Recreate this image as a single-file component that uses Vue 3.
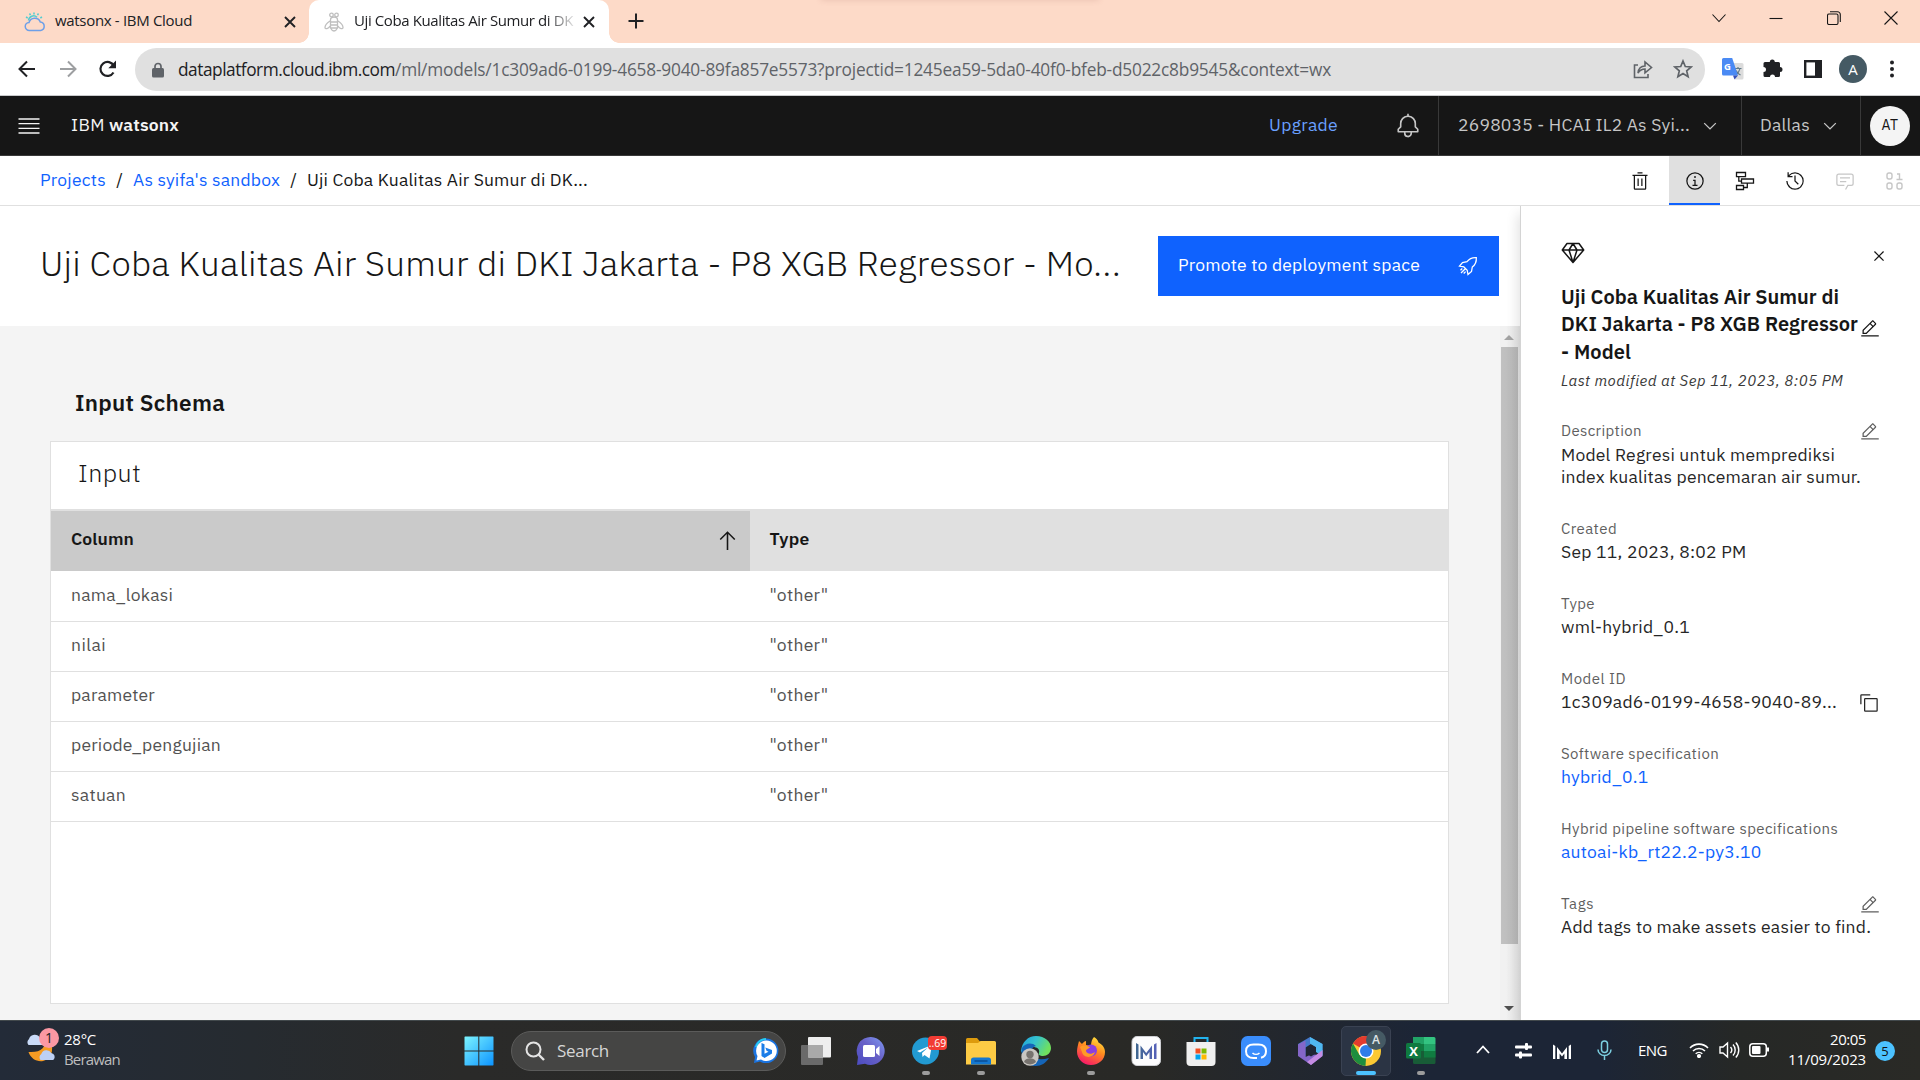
<script setup>
import { h } from 'vue'

/* Spreads the letters of a label so that it fills the given width in pixels. */
const vFit = {
  mounted(el, binding) {
    const natural = el.getBoundingClientRect().width
    const spacing = (binding.value - natural) / el.textContent.length
    el.style.letterSpacing = spacing.toFixed(3) + 'px'
  },
}

const paths = {
  trash: 'M12 12H14V24H12zM18 12H20V24H18zM4 6V8H6V28a2 2 0 002 2H24a2 2 0 002-2V8h2V6zM8 28V8H24V28zM12 2H20V4H12z',
  info: 'M17 22V14H13V16H15V22H12V24H20V22zM16 8a1.5 1.5 0 101.5 1.5A1.5 1.5 0 0016 8zM16 30A14 14 0 1130 16 14 14 0 0116 30zM16 4A12 12 0 1028 16 12 12 0 0016 4z',
  edit: 'M2 26H30V28H2zM25.4 9c.8-.8.8-2 0-2.8l-3.6-3.6c-.8-.8-2-.8-2.8 0l-15 15V24h6.4L25.4 9zM20.4 4L24 7.6l-3 3L17.4 7 20.4 4zM6 22v-3.6l10-10 3.6 3.6-10 10H6z',
  copy: 'M28 10V28H10V10H28m0-2H10a2 2 0 00-2 2V28a2 2 0 002 2H28a2 2 0 002-2V10a2 2 0 00-2-2zM4 18H2V4A2 2 0 014 2H18V4H4z',
  bell: 'M28.707 19.293L26 16.586V13a10.014 10.014 0 00-9-9.95V1H15V3.05A10.014 10.014 0 006 13v3.586L3.293 19.293A1 1 0 003 20v3a1 1 0 001 1h7v.777a5.152 5.152 0 004.5 5.199A5.006 5.006 0 0021 25V24h7a1 1 0 001-1V20A1 1 0 0028.707 19.293zM19 25a3 3 0 01-6 0V24h6zm8-3H5V20.414L7.707 17.707A1 1 0 008 17V13a8 8 0 0116 0v4a1 1 0 00.293.707L27 20.414z',
  chevron: 'M16 22L6 12 7.4 10.6 16 19.2 24.6 10.6 26 12z',
  history: 'M20.59 22L15 16.41V7h2v8.58l5 5.01zM16 2A13.94 13.94 0 006 6.23V2H4v8h8V8H7.08A12 12 0 114 16H2A14 14 0 1016 2z',
  arrowUp: 'M16 4L6 14 7.41 15.41 15 7.83V28h2V7.83l7.59 7.58L26 14z',
  close: 'M24 9.4L22.6 8 16 14.6 9.4 8 8 9.4 14.6 16 8 22.6 9.4 24 16 17.4 22.6 24 24 22.6 17.4 16z',
  chat: 'M17.740 30L16 29l4-7h6a2 2 0 002-2V8a2 2 0 00-2-2H6A2 2 0 004 8V20a2 2 0 002 2h9v2H6a4 4 0 01-4-4V8A4 4 0 016 4H26a4 4 0 014 4V20a4 4 0 01-4 4H21.160zM8 10H24V12H8zM8 16H18V18H8z',
}

const Icon = (props) =>
  h('svg', { viewBox: '0 0 32 32', width: props.size, height: props.size, fill: 'currentColor' }, [
    h('path', { d: paths[props.name] }),
  ])
Icon.props = ['name', 'size']

const rows = [
  { name: 'nama_lokasi', w: 102 },
  { name: 'nilai', w: 35 },
  { name: 'parameter', w: 84 },
  { name: 'periode_pengujian', w: 150 },
  { name: 'satuan', w: 55 },
]

const details = [
  { label: 'Description', lw: 81, lines: [['Model Regresi untuk memprediksi', 274], ['index kualitas pencemaran air sumur.', 300]], icon: 'edit' },
  { label: 'Created', lw: 56, lines: [['Sep 11, 2023, 8:02 PM', 185.5]] },
  { label: 'Type', lw: 34, lines: [['wml-hybrid_0.1', 129]] },
  { label: 'Model ID', lw: 65, lines: [['1c309ad6-0199-4658-9040-89...', 276]], icon: 'copy' },
  { label: 'Software specification', lw: 158, lines: [['hybrid_0.1', 87.5]], link: true },
  { label: 'Hybrid pipeline software specifications', lw: 277, lines: [['autoai-kb_rt22.2-py3.10', 200.5]], link: true },
  { label: 'Tags', lw: 33, lines: [['Add tags to make assets easier to find.', 310]], icon: 'edit' },
]
</script>

<template>
  <div class="screen">
    <div class="tabs">
      <div class="tab first">
        <svg class="favicon" width="22" height="20" viewBox="0 0 22 20" fill="none" stroke-width="1.500">
          <g stroke="#52cdd0">
            <path d="M4.500 8.500a5 5 0 0 1 8.500-3.200M10 .5v2M5.500 1.500l1 1.700M2 5l1.700 1M14.500 1.500l-1 1.700M18 5l-1.700 1" />
          </g>
          <path d="M5.500 18.500a4 4 0 0 1-.5-8 6 6 0 0 1 11.300-.5 4.300 4.300 0 0 1 .4 8.500z" stroke="#6d9fe8" />
        </svg>
        <span v-fit="137" class="tab-text">watsonx - IBM Cloud</span>
        <svg class="tab-x" width="12" height="12" viewBox="0 0 12 12"><path d="M1 1l10 10M11 1L1 11" stroke="#202124" stroke-width="1.900" /></svg>
      </div>
      <div class="tab active">
        <svg class="bee" width="20" height="20" viewBox="0 0 20 20" fill="none" stroke="#bfbfbf" stroke-width="1.300">
          <circle cx="7.500" cy="3" r="1.800" /><circle cx="12.500" cy="3" r="1.800" />
          <path d="M6.500 8a3.500 3 0 0 1 7 0v8c-1 2-2 3-3.500 3s-2.500-1-3.500-3zM6.500 10h7M6.500 13h7M7 16h6M6 9c-3 2-5 4-5 6.500 0 2 3.500 1.500 5-1.500M14 9c3 2 5 4 5 6.500 0 2-3.500 1.500-5-1.500" />
        </svg>
        <span class="fade"><span v-fit="219" class="tab-text">Uji Coba Kualitas Air Sumur di DK</span></span>
        <svg class="tab-x" width="12" height="12" viewBox="0 0 12 12"><path d="M1 1l10 10M11 1L1 11" stroke="#202124" stroke-width="1.900" /></svg>
      </div>
      <svg class="plus" width="16" height="16" viewBox="0 0 16 16"><path d="M8 .5v15M.5 8h15" stroke="#202124" stroke-width="2" /></svg>
      <div class="notch"></div>
      <div class="win">
        <svg width="14" height="14" viewBox="0 0 14 14"><path d="M.5 3.500l6.500 7 6.500-7" /></svg>
        <svg width="14" height="14" viewBox="0 0 14 14"><path d="M.5 7.500h13" /></svg>
        <svg width="14" height="14" viewBox="0 0 14 14"><rect x=".5" y="3" width="10.500" height="10.500" rx="1.500" /><path d="M3 .8h7.500a2.800 2.800 0 0 1 2.800 2.800v7.400" /></svg>
        <svg width="14" height="14" viewBox="0 0 14 14"><path d="M.5.5l13 13M13.500.5l-13 13" /></svg>
      </div>
    </div>

    <div class="toolbar">
      <svg class="nav-back" width="18" height="18" viewBox="0 0 18 18"><path d="M17 9H2.500M9 1.500L1.500 9 9 16.500" fill="none" stroke="#202124" stroke-width="2" /></svg>
      <svg class="nav-next" width="18" height="18" viewBox="0 0 18 18"><path d="M1 9h14.500M9 1.500L16.500 9 9 16.500" fill="none" stroke="#9d9fa1" stroke-width="2" /></svg>
      <svg class="nav-reload" width="20" height="18" viewBox="0 0 20 18"><path d="M15.500 12.500a7 7 0 1 1 .3-6.500" fill="none" stroke="#202124" stroke-width="2.200" /><path d="M18 .5v7.700h-7.700z" fill="#202124" /></svg>
      <div class="address">
        <svg class="lock" width="12" height="16" viewBox="0 0 12 16"><rect x="0" y="6" width="12" height="9.500" rx="1.500" fill="#5f6368" /><path d="M3 7V4.500a3 3 0 0 1 6 0V7" fill="none" stroke="#5f6368" stroke-width="1.700" /></svg>
        <span v-fit="217" class="url host">dataplatform.cloud.ibm.com</span>
        <span v-fit="936" class="url rest">/ml/models/1c309ad6-0199-4658-9040-89fa857e5573?projectid=1245ea59-5da0-40f0-bfeb-d5022c8b9545&amp;context=wx</span>
        <svg class="share" width="20" height="20" viewBox="0 0 20 20" fill="none" stroke="#5f6368" stroke-width="1.600"><path d="M5 6H1.500v12.500H15V15M5 14c.5-4.500 3-7 7-7V3l6.500 5.500-6.500 5.300V10c-3 0-5 1-7 4z" /></svg>
        <svg class="star" width="20" height="20" viewBox="0 0 20 20" fill="none" stroke="#5f6368" stroke-width="1.700"><path d="M10 2l2.300 5.500 5.900.5-4.500 3.900 1.400 5.800L10 14.600l-5.100 3.100 1.400-5.800L1.800 8l5.900-.5z" /></svg>
      </div>
      <svg class="translate" width="22" height="22" viewBox="0 0 22 22">
        <path d="M9 5h11a1.500 1.500 0 0 1 1.500 1.500V20a1.500 1.500 0 0 1-1.500 1.500h-7z" fill="#dcdcdc" />
        <path d="M12.500 10.500h7M16 9v1.500M18 10.500c-.5 2.500-2 4.500-4 6M14 12.500c1 2 2.500 3.500 4.500 4.500" stroke="#607988" stroke-width="1.200" fill="none" />
        <path d="M1.500 0h8.700l5.800 17.500H1.500A1.500 1.500 0 0 1 0 16V1.500A1.500 1.500 0 0 1 1.500 0z" fill="#4a8af4" />
        <path d="M11 17.500h5L12.500 21.500z" fill="#3551b8" />
        <text x="2" y="11.500" font-size="9.500" font-weight="700" fill="#fff" font-family="Open Sans, sans-serif">G</text>
      </svg>
      <svg class="puzzle" width="20" height="20" viewBox="0 0 20 20"><path d="M2 5h4.800a2.500 2.500 0 1 1 5 0H15.500a1.500 1.500 0 0 1 1.500 1.500V10a2.500 2.500 0 1 1 0 5v3.500A1.500 1.500 0 0 1 15.500 20H12a2.500 2.500 0 0 0-5 0H2a1.500 1.500 0 0 1-1.500-1.500V15a2.500 2.500 0 0 0 0-5V6.500A1.500 1.500 0 0 1 2 5z" fill="#202124" /></svg>
      <svg class="side" width="18" height="18" viewBox="0 0 18 18"><rect x="1.200" y="1.200" width="15.600" height="15.600" fill="#fff" stroke="#202124" stroke-width="2.400" /><rect x="11" y="1" width="6" height="16" fill="#202124" /></svg>
      <div class="avatar">A</div>
      <svg class="kebab" width="4" height="18" viewBox="0 0 4 18" fill="#202124"><circle cx="2" cy="2.500" r="2" /><circle cx="2" cy="9" r="2" /><circle cx="2" cy="15.500" r="2" /></svg>
    </div>

    <header class="header">
      <svg class="burger" width="22" height="16" viewBox="0 0 22 16" stroke="#f4f4f4" stroke-width="1.300"><path d="M.5 1h21M.5 5.700h21M.5 10.300h21M.5 15h21" /></svg>
      <span class="brand"><span v-fit="34" class="ib">IBM</span><b v-fit="70" class="ib">watsonx</b></span>
      <span v-fit="69" class="upgrade">Upgrade</span>
      <Icon name="bell" size="26" class="bell" />
      <div class="account"><span v-fit="232" class="ib">2698035 - HCAI IL2 As Syi...</span><Icon name="chevron" size="20" class="chev" /></div>
      <div class="region"><span v-fit="50" class="ib">Dallas</span><Icon name="chevron" size="20" class="chev" /></div>
      <div class="user"><div class="user-circle"><span v-fit="17">AT</span></div></div>
    </header>

    <nav class="crumbs">
      <a v-fit="66">Projects</a><i>/</i>
      <a v-fit="147">As syifa's sandbox</a><i>/</i>
      <span v-fit="281" class="here">Uji Coba Kualitas Air Sumur di DK...</span>
      <div class="actions">
        <div class="act"><Icon name="trash" size="20" /></div>
        <div class="act on"><Icon name="info" size="20" /></div>
        <div class="act">
          <svg width="20" height="20" viewBox="0 0 20 20" fill="none" stroke="#161616" stroke-width="1.300"><path d="M1.500 1.500h9v4.200h-9zM6.500 8h12v4.200h-12zM1.500 14.500h7v4h-7zM3.800 5.700v4.400h2.700M12.300 12.200v4.300H8.500" /></svg>
        </div>
        <div class="act"><Icon name="history" size="20" /></div>
        <div class="act off"><Icon name="chat" size="20" /></div>
        <div class="act off">
          <svg width="20" height="20" viewBox="0 0 20 20" fill="none" stroke="currentColor" stroke-width="1.400"><rect x="2" y="2" width="5" height="6" rx="2" /><rect x="2" y="12" width="5" height="6" rx="2" /><rect x="12" y="12" width="5" height="6" rx="2" /><path d="M12 3h2.500v5.500M11.500 8.500h6" /></svg>
        </div>
      </div>
    </nav>

    <div class="body">
      <main class="main">
        <div class="title-row">
          <h1 v-fit="1081">Uji Coba Kualitas Air Sumur di DKI Jakarta - P8 XGB Regressor - Mo...</h1>
          <div class="promote">
            <span v-fit="242" class="ib">Promote to deployment space</span>
            <svg width="20" height="20" viewBox="0 0 20 20" fill="none" stroke="#fff" stroke-width="1.300"><path d="M18.300 1.700c-4-.3-7 1-9.300 4L4.500 6.500 1.500 10l4.300.8 3.400 3.400.8 4.300 3.500-3 .8-4.500c3-2.300 4.300-5.300 4-9.300zM7.500 12.500L3 17M4.300 12.500L2.500 14.300M7.600 15.600L5.700 17.500" /></svg>
          </div>
        </div>
        <div class="scroll">
          <div class="content">
            <h2><span v-fit="150" class="ib">Input Schema</span></h2>
            <section class="card">
              <div class="card-title"><span v-fit="63" class="ib">Input</span></div>
              <div class="thead">
                <div class="th sorted"><span v-fit="63" class="ib">Column</span><Icon name="arrowUp" size="25" class="sort" /></div>
                <div class="th"><span v-fit="40" class="ib">Type</span></div>
              </div>
              <div class="tbody">
                <div v-for="row in rows" :key="row.name" class="tr">
                  <div class="td"><span v-fit="row.w" class="ib">{{ row.name }}</span></div>
                  <div class="td"><span v-fit="59" class="ib">"other"</span></div>
                </div>
              </div>
            </section>
          </div>
          <div class="bar">
            <div class="up"></div>
            <div class="thumb"></div>
            <div class="down"></div>
          </div>
        </div>
      </main>

      <aside class="panel">
        <div class="panel-top">
          <svg class="gem" width="24" height="22" viewBox="0 0 24 22" fill="none" stroke="#161616" stroke-width="1.500" stroke-linejoin="round"><path d="M6 1.500h12L22.700 8 12 20.500 1.300 8zM1.300 8h21.400M12 1.500L8 8l4 12.500L16 8z" /></svg>
          <Icon name="close" size="20" class="panel-x" />
        </div>
        <div class="name">
          <div class="name-text">
            <span v-fit="278" class="line">Uji Coba Kualitas Air Sumur di</span>
            <span v-fit="297" class="line">DKI Jakarta - P8 XGB Regressor</span>
            <span v-fit="70" class="line">- Model</span>
          </div>
          <Icon name="edit" size="20" class="name-edit" />
        </div>
        <div class="modified"><span v-fit="282" class="ib">Last modified at Sep 11, 2023, 8:05 PM</span></div>
        <div v-for="d in details" :key="d.label" class="detail" :class="{ link: d.link }">
          <div class="label"><span v-fit="d.lw" class="ib">{{ d.label }}</span></div>
          <div class="value"><span v-for="l in d.lines" :key="l[0]" v-fit="l[1]" class="line">{{ l[0] }}</span></div>
          <Icon v-if="d.icon" :name="d.icon" size="20" :class="'d-' + d.icon" />
        </div>
      </aside>
    </div>

    <footer class="taskbar">
      <div class="weather">
        <svg width="34" height="36" viewBox="0 0 34 36">
          <path d="M20 12c1 7-4 13-16.500 12C6 31 12 34 18 33c8-1.500 11-10 8-19z" fill="#f59b23" />
          <path d="M3.500 17a4.500 4.500 0 0 1 .5-6 6 6 0 0 1 11-1 4.500 4.500 0 0 1 2 7z" fill="#c9dbf8" />
          <path d="M15.500 32a4 4 0 0 1 .8-6 5.500 5.500 0 0 1 10-1 4 4 0 0 1 2 7z" fill="#bdd0f5" />
          <circle cx="24" cy="10" r="10" fill="#fb98a3" />
          <text x="24" y="15" text-anchor="middle" font-size="14" fill="#222" font-family="Open Sans, sans-serif">1</text>
        </svg>
        <div class="temps"><span v-fit="32" class="tl">28°C</span><span v-fit="56" class="tl dim">Berawan</span></div>
      </div>

      <svg class="start" width="30" height="30" viewBox="0 0 30 30">
        <defs><linearGradient id="win" x1="0" y1="0" x2="1" y2="1"><stop offset="0" stop-color="#7cf4ff" /><stop offset="1" stop-color="#0c93ff" /></linearGradient></defs>
        <path d="M1 .5h13.300v14H.5V1zM15.300.5H29l.5.500v13.500H15.300zM.5 15.500h13.800v14H1l-.5-.5zM15.300 15.500h14.200V29l-.5.500H15.300z" fill="url(#win)" />
      </svg>
      <div class="search">
        <svg width="20" height="20" viewBox="0 0 20 20" fill="none" stroke="#e4e4e4" stroke-width="2"><circle cx="8.500" cy="8.500" r="7" /><path d="M13.500 13.500l5.500 5.500" stroke-width="2.400" /></svg>
        <span v-fit="52" class="ib">Search</span>
        <svg class="bing" width="26" height="26" viewBox="0 0 26 26"><path d="M13 .5a12.300 12.300 0 1 1-6 23L1 25l1-6A12.300 12.300 0 0 1 13 .5z" fill="#1a73e0" /><path d="M3 9A10.800 10.800 0 0 1 13 1" fill="none" stroke="#27cdf2" stroke-width="2" /><path d="M13 2.500a10.300 10.300 0 1 1-5 19L3.500 22.500 4.500 18A10.300 10.300 0 0 1 13 2.500z" fill="#fff" /><path d="M8.500 5l3 1.200v9.500l4-2-2-1-1.200-3.200L19 12v3.500L11.500 20l-3-2z" fill="#1b7de8" /></svg>
      </div>

      <div class="apps">
        <div class="app"><svg width="30" height="30" viewBox="0 0 30 30"><rect x="0" y="9" width="22" height="20" rx="1" fill="#6a6a6a" /><rect x="7" y="1" width="23" height="20.500" rx="1" fill="#eee" /><path d="M7 9h15v12.500H7z" fill="#a9a9a9" /></svg></div>
        <div class="app"><svg width="30" height="30" viewBox="0 0 30 30"><defs><linearGradient id="teams" x1="0" y1="1" x2="1" y2="0"><stop offset="0" stop-color="#4b4bc0" /><stop offset=".55" stop-color="#6962c8" /><stop offset="1" stop-color="#7f9bf5" /></linearGradient></defs><path d="M15 1a14 14 0 1 1-6 26.800L1 29l1-8A14 14 0 0 1 15 1z" fill="url(#teams)" /><rect x="7" y="9" width="12" height="12" rx="1.500" fill="#fff" /><path d="M20 13l3.500-3v10L20 17z" fill="#fff" /></svg></div>
        <div class="app run">
          <svg width="30" height="30" viewBox="0 0 30 30"><circle cx="14.500" cy="15" r="13.500" fill="#229ad2" /><path d="M6 15l15-6-2.500 13.500-5-3.500-2 2-.5-4 6-5.500-8 5z" fill="#fff" /></svg>
          <span class="badge">..69</span>
        </div>
        <div class="app run"><svg width="30" height="30" viewBox="0 0 30 30"><path d="M0 3.500A1.500 1.500 0 0 1 1.500 2H11l3 3.500V10H0z" fill="#dd9b0d" /><path d="M0 7h12l2.500-2H28.500A1.500 1.500 0 0 1 30 6.500V28.500H0z" fill="#fdcb45" /><path d="M5 28.500V24a2.500 2.500 0 0 1 2.500-2.500h15A2.500 2.500 0 0 1 25 24v4.500z" fill="#1477d0" /><path d="M8.500 25h13" stroke="#0a4c94" stroke-width="1.500" /></svg></div>
        <div class="app"><svg width="30" height="30" viewBox="0 0 30 30"><defs><linearGradient id="edge" x1="0" y1="0" x2="1" y2=".4"><stop offset="0" stop-color="#1f9ddd" /><stop offset=".5" stop-color="#35c3ce" /><stop offset="1" stop-color="#6fe05e" /></linearGradient></defs><path d="M0 15C1 6 7 0 15 0c9 0 15 6 15 12 0 5-4 8-8 8-3 0-5-1-4-3 1-4-2-6-6-6-6 0-9 4-9 9z" fill="url(#edge)" /><path d="M1 12c3-5 10-6 14-2-4 1-6 5-4 9 3 5 10 5 17 3-3 5-8 8-13 8C5 30-1 22 1 12z" fill="#1565b8" /><circle cx="9" cy="21" r="8.700" fill="#c9c6c2" /><circle cx="9" cy="18.500" r="3.700" fill="#77736f" /><path d="M3 26c1-5 11-5 12 0a8.500 8.500 0 0 1-12 0z" fill="#77736f" /></svg></div>
        <div class="app run"><svg width="30" height="30" viewBox="0 0 30 30"><defs><linearGradient id="fox" x1=".8" y1="0" x2=".3" y2="1"><stop offset="0" stop-color="#ffe63e" /><stop offset=".45" stop-color="#ff8a1f" /><stop offset="1" stop-color="#f7156b" /></linearGradient></defs><path d="M18 1c2 1 4 3 4.500 5.500C27 9 29 12 29 16c0 7.500-6 13-14 13S1 23 1 15.500C1 12 2 9 3 5l3 3c2-2 1.500-2 4-3v4l5 1c0-4 1-7 3-9z" fill="url(#fox)" /><circle cx="15" cy="14.500" r="6" fill="#8a3fe0" /><path d="M4 11c4-3 7-1 10 0-1 2-4 2-4 4 1 3 5 4 9 1-2 7-12 6-13 0z" fill="#ff9a26" /></svg></div>
        <div class="app"><svg width="30" height="30" viewBox="0 0 30 30"><defs><linearGradient id="mm" x1="0" y1="0" x2="1" y2="0"><stop offset="0" stop-color="#3f6790" /><stop offset="1" stop-color="#5560b8" /></linearGradient></defs><rect x="1" y=".5" width="28.500" height="29" rx="5" fill="#fcfcfd" stroke="#cfd0d4" /><path d="M5 7l2.500 1.500V23H5zM9.500 9.500L15.200 17l5.800-7.500V23h-2.500v-7l-3.300 4.200L12 16v7H9.500zM23 8.500L25.500 7v16H23z" fill="url(#mm)" /></svg></div>
        <div class="app"><svg width="30" height="30" viewBox="0 0 30 30"><path d="M8.500 7V2h13v5" fill="none" stroke="#22b3ee" stroke-width="2" /><path d="M.5 6h29v20a4 4 0 0 1-4 4h-21a4 4 0 0 1-4-4z" fill="#efefef" /><path d="M9.500 12.500h5v5h-5z" fill="#f25022" /><path d="M15.500 12.500h5v5h-5z" fill="#7fba00" /><path d="M9.500 18.500h5v5h-5z" fill="#00a4ef" /><path d="M15.500 18.500h5v5h-5z" fill="#ffb900" /></svg></div>
        <div class="app"><svg width="30" height="30" viewBox="0 0 30 30"><rect width="30" height="30" rx="6.500" fill="#3a8dfc" /><path d="M16 22h-3.500C8 22 5 19.500 5 15.200S8 8.500 12.500 8.500h5c4.500 0 7.500 2.400 7.500 6.700 0 3.300-1.800 5.800-5 6.500" fill="none" stroke="#fff" stroke-width="2" /><path d="M11.500 17c2 1.800 5 1.800 7 0" fill="none" stroke="#fff" stroke-width="1.500" /></svg></div>
        <div class="app"><svg width="30" height="30" viewBox="0 0 30 30"><path d="M14 1L26.500 8v11L20 15V11L15 8 9.500 11.500V22L2 19V8z" fill="#4478c8" /><path d="M14 1l12.500 7v12L20 16V11l-6-3.500z" fill="#4fb8ef" /><path d="M2 8.500l7.500-4V21L16 18l10.500 2L15 29 2 20z" fill="#8466c8" /><path d="M26.500 14v6L15 29l-4-3z" fill="#c58ce3" /><path d="M15 9.500l5 3v5l-5 3-5-3v-5z" fill="#1f2634" /></svg></div>
        <div class="app run chrome">
          <svg width="30" height="30" viewBox="0 0 30 30"><circle cx="15" cy="15" r="15" fill="#fcc934" /><path d="M15 15L2 7.500A15 15 0 0 1 28 7.500z" fill="#e33b2e" /><path d="M2 7.500L8.500 19 15 22.500 14.500 30A15 15 0 0 1 2 7.500z" fill="#1e8e3e" /><path d="M15 7.500h13A15 15 0 0 0 15 0z" fill="#e33b2e" /><circle cx="15" cy="15" r="7.500" fill="#fff" /><circle cx="15" cy="15" r="6" fill="#2f7de9" /></svg>
          <span class="profile">A</span>
        </div>
        <div class="app run"><svg width="30" height="30" viewBox="0 0 30 30"><path d="M7 1h11v14H7z" fill="#21a366" /><path d="M18 1h10a1.500 1.500 0 0 1 1.500 1.500V8H18z" fill="#33c481" /><path d="M7 8h11v7H7z" fill="#107c41" /><path d="M18 8h11.500v7H18z" fill="#21a366" /><path d="M7 15h22.500v11.500A1.500 1.500 0 0 1 28 28H8.500A1.500 1.500 0 0 1 7 26.500z" fill="#185c37" /><path d="M18 15h11.500v6.500H18z" fill="#107c41" /><rect x="0" y="7" width="15" height="15.500" rx="1.500" fill="#0f7a40" /><text x="7.500" y="19.500" text-anchor="middle" font-size="13" font-weight="700" fill="#fff" font-family="Open Sans, sans-serif">X</text></svg></div>
      </div>

      <div class="tray">
        <svg class="t-up" width="14" height="9" viewBox="0 0 14 9"><path d="M1 8l6-6.500L13 8" fill="none" stroke="#fff" stroke-width="1.800" /></svg>
        <svg class="t-sl" width="19" height="16" viewBox="0 0 19 16" fill="#fff"><rect x="1" y="2.500" width="17" height="3" rx="1" /><rect x="11" y="0" width="3" height="7" rx="1" /><rect x="1" y="10.500" width="17" height="3" rx="1" /><rect x="5" y="8.500" width="3" height="7" rx="1" /></svg>
        <svg class="t-m" width="18" height="15" viewBox="0 0 18 15"><path d="M0 .5L2.300 2v13H0zM4 3l5 6.500L14 3v12h-2.600v-5.500L9 12.500 6.600 9.500V15H4zM15.700 2L18 .5V15h-2.300z" fill="#fff" /></svg>
        <svg class="t-mic" width="15" height="20" viewBox="0 0 15 20" fill="none" stroke="#7ccfe0" stroke-width="1.500"><rect x="4.500" y="1" width="6" height="11.500" rx="3" /><path d="M1 9.500a6.500 6 0 0 0 13 0M7.500 15.500V20" /></svg>
        <span v-fit="29" class="eng">ENG</span>
        <svg class="t-wifi" width="20" height="16" viewBox="0 0 20 16" fill="none" stroke="#fff" stroke-width="1.600"><path d="M1 6a12.500 12.500 0 0 1 18 0M4 9a8.500 8.500 0 0 1 12 0M6.700 11.800a4.700 4.700 0 0 1 6.600 0" /><circle cx="10" cy="14" r="1.300" fill="#fff" /></svg>
        <svg class="t-vol" width="21" height="18" viewBox="0 0 21 18" fill="none" stroke="#fff" stroke-width="1.400"><path d="M1 6h3l4.500-4v14L4 12H1zM11.500 6a4.500 4.500 0 0 1 0 6M14 3.500a8 8 0 0 1 0 11M16.800 1.500a11 11 0 0 1 0 15" /></svg>
        <svg class="t-bat" width="21" height="14" viewBox="0 0 21 14"><rect x=".8" y=".8" width="16.500" height="12.400" rx="3" fill="none" stroke="#fff" stroke-width="1.500" /><rect x="3" y="3" width="8.500" height="8" rx="1" fill="#fff" /><path d="M18 4.500h2v4h-2z" fill="#fff" /></svg>
        <div class="clock"><span v-fit="36" class="tl">20:05</span><span v-fit="78" class="tl">11/09/2023</span></div>
        <div class="count">5</div>
      </div>
    </footer>
  </div>
</template>

<style>
body {
  margin: 0;
  overflow: hidden;
}
</style>

<style scoped>
.screen {
  width: 1920px;
  height: 1080px;
  display: flex;
  flex-direction: column;
  overflow: hidden;
  background: #fff;
  color: #161616;
  font: 400 17.5px 'IBM Plex Sans', 'Noto Sans', sans-serif;
  white-space: nowrap;
}
.screen * { box-sizing: border-box; }
svg { display: block; flex: none; }
.ib { display: inline-block; }
.line { display: block; width: max-content; }

/* Browser tabs */
.tabs {
  position: relative;
  height: 43px;
  display: flex;
  background: #fddac8;
  font: 15px 'Segoe UI', 'Open Sans', sans-serif;
  color: #202124;
}
.tab { display: flex; align-items: center; height: 43px; }
.tab.first { width: 309px; padding-left: 24px; }
.favicon { margin-right: 9px; }
.tab-text { display: inline-block; line-height: 38px; margin-top: -4px; }
.first .tab-x { margin-left: auto; margin-right: 13px; }
.tab.active {
  position: relative;
  width: 300px;
  padding-left: 15px;
  background: #fff;
  border-radius: 10px 10px 0 0;
}
.tab.active::before,
.tab.active::after {
  content: '';
  position: absolute;
  bottom: 0;
  width: 10px;
  height: 10px;
}
.tab.active::before { left: -10px; background: radial-gradient(circle at 0 0, transparent 9.5px, #fff 10px); }
.tab.active::after { right: -10px; background: radial-gradient(circle at 100% 0, transparent 9.5px, #fff 10px); }
.bee { margin-right: 10px; }
.fade {
  width: 221px;
  overflow: hidden;
  -webkit-mask-image: linear-gradient(90deg, #000 192px, transparent 224px);
  mask-image: linear-gradient(90deg, #000 192px, transparent 224px);
}
.active .tab-x { margin-left: 8px; }
.plus { margin: 13px 0 0 19px; }
.notch {
  position: absolute;
  left: 822px;
  top: -7px;
  width: 276px;
  height: 6px;
  box-shadow: 0 0 6px 1px rgba(150, 90, 80, 0.2);
}
.win { display: flex; gap: 43.3px; margin: 11px 22px 0 auto; }
.win svg { fill: none; stroke: #161616; stroke-width: 1.1; }

/* Toolbar */
.toolbar {
  height: 53px;
  display: flex;
  align-items: center;
  border-bottom: 1px solid #c9cacc;
  background: #fff;
}
.nav-back { margin-left: 18px; }
.nav-next { margin-left: 23px; }
.nav-reload { margin-left: 21px; }
.address {
  width: 1570px;
  height: 43px;
  margin-left: 17px;
  display: flex;
  align-items: center;
  border-radius: 22px;
  background: #e0e0e0;
}
.lock { margin: 2px 14px 0 17px; }
.url { margin-top: 2px; font: 17.3px/40px 'Segoe UI', 'Open Sans', sans-serif; color: #5f6368; }
.url.host { color: #202124; }
.share { margin-left: auto; }
.star { margin: 0 12px 0 20px; }
.translate { margin-left: 17px; }
.puzzle { margin-left: 19px; margin-top: -4px; }
.side { margin-left: 21px; }
.avatar {
  width: 28px;
  height: 28px;
  margin-left: 17px;
  border-radius: 50%;
  background: #455a64;
  color: #fff;
  font: 15px/28px 'Open Sans', sans-serif;
  text-align: center;
}
.kebab { margin-left: 23px; }

/* Platform header */
.header {
  height: 60px;
  display: flex;
  align-items: center;
  border-bottom: 1px solid #393939;
  background: #161616;
  color: #c6c6c6;
}
.header .ib,
.upgrade { margin-top: -2px; }
.burger { margin-left: 18px; }
.brand { margin-left: 31px; display: flex; gap: 4px; color: #f4f4f4; }
.brand b { font-weight: 600; }
.upgrade { margin-left: auto; color: #6aa0ff; }
.bell { margin-left: 57px; }
.account,
.region,
.user { height: 59px; display: flex; align-items: center; border-left: 1px solid #393939; }
.account { width: 303px; margin-left: 17px; padding-left: 19px; }
.account .chev { margin-left: 10px; }
.region { width: 119px; padding-left: 18px; }
.region .chev { margin-left: 10px; }
.user { width: 60px; padding-left: 9px; }
.user-circle {
  width: 40px;
  height: 40px;
  border-radius: 50%;
  background: #f4f4f4;
  color: #161616;
  font-size: 14px;
  line-height: 39px;
  text-align: center;
}

/* Breadcrumbs */
.crumbs {
  height: 50px;
  display: flex;
  align-items: center;
  padding-left: 40px;
  border-bottom: 1px solid #e0e0e0;
}
.crumbs > a,
.crumbs > i,
.here { margin-top: -2px; }
.crumbs a { color: #0f62fe; }
.crumbs i { width: 27px; text-align: center; font-style: normal; }
.actions { display: flex; margin-left: auto; height: 49px; }
.act {
  width: 50px;
  display: flex;
  align-items: center;
  justify-content: center;
}
.act:first-child { width: 59px; }
.act.on { width: 51px; background: #e0e0e0; border-bottom: 2px solid #0f62fe; padding-top: 2px; }
.act.off { color: #c6c6c6; }

/* Main column */
.body { display: flex; height: 814px; }
.main { width: 1520px; display: flex; flex-direction: column; }
.title-row { height: 120px; display: flex; align-items: flex-start; padding: 30px 0 0 40px; }
h1 { margin: 0; font-size: 35px; font-weight: 300; line-height: 54px; }
.promote {
  width: 341px;
  height: 60px;
  margin-left: 37px;
  padding: 0 21px 0 20px;
  display: flex;
  align-items: center;
  justify-content: space-between;
  background: #0f62fe;
  color: #fff;
}
.promote .ib { margin-top: -3px; }
.scroll { flex: 1; display: flex; background: #f4f4f4; }
.content { width: 1500px; padding: 62px 0 0 50px; }
h2 { margin: 0 0 23px 25px; font-size: 22.5px; font-weight: 600; line-height: 30px; }
.card { width: 1399px; height: 563px; border: 1px solid #e0e0e0; background: #fff; }
.card-title { height: 67px; padding-left: 27px; font-size: 25px; font-weight: 300; line-height: 61px; }
.thead { display: flex; height: 62px; padding-top: 2px; background: #e0e0e0; font-weight: 600; }
.th { width: 699px; padding-left: 20px; line-height: 55px; display: flex; }
.th.sorted { background: #cacaca; }
.sort { margin: 17px 10px 0 auto; }
.tbody { padding-top: 1px; }
.tr { display: flex; height: 50px; border-bottom: 1px solid #e0e0e0; color: #525252; line-height: 45px; }
.td { width: 699px; padding-left: 20px; }
.bar { width: 20px; background: linear-gradient(90deg, #f1f1f1 30%, #e4e4e4); }
.up,
.down { width: 0; height: 0; border: 5px solid transparent; margin-left: 4px; }
.up { height: 21px; border-top: 9px solid transparent; border-bottom: 0; }
.up::after {
  content: '';
  display: block;
  width: 0;
  margin-left: -5px;
  border: 5px solid transparent;
  border-top: 0;
  border-bottom-color: #a3a3a3;
}
.thumb { width: 17px; height: 597px; margin-left: 1px; background: linear-gradient(90deg, #c1c1c1, #b9b9b9); }
.down { margin-top: 62px; border-top-color: #505050; border-bottom: 0; }

/* Details panel */
.panel {
  width: 400px;
  padding-left: 40px;
  border-left: 1px solid #d4d4d4;
  background: #fff;
  box-shadow: -2px 8px 12px rgba(0, 0, 0, 0.12);
  clip-path: inset(0 0 0 -16px);
}
.panel-top { height: 76.5px; display: flex; align-items: flex-start; }
.gem { margin-top: 36px; }
.panel-x { margin: 40px 31px 0 auto; }
.name { display: flex; font-size: 20px; font-weight: 600; line-height: 27.5px; }
.name-text { width: 298px; }
.name-edit { margin: 36px 0 0 1px; }
.modified {
  height: 20px;
  margin: 5.5px 0 30px;
  font-size: 15px;
  font-style: italic;
  line-height: 20px;
  color: #393939;
}
.detail { position: relative; margin-bottom: 31px; }
.label { height: 22px; font-size: 15px; line-height: 20px; color: #5f5f5f; }
.modified + .detail .label { height: 23px; }
.value { line-height: 22px; color: #262626; }
.link .value { color: #0f62fe; }
.d-edit,
.d-copy { position: absolute; left: 299px; top: 1px; color: #5f5f5f; }
.d-copy { top: 24px; left: 298px; color: #262626; }

/* Taskbar */
.taskbar {
  position: relative;
  height: 60px;
  display: flex;
  align-items: center;
  border-top: 1px solid #42494c;
  background: linear-gradient(90deg, #232b38 0, #262b30 250px, #2a2a29 460px, #292926 1150px, #1c2536 1420px, #1c2536 1600px, #262826 1740px, #2a2a26 100%);
  color: #fff;
  font: 15px 'Segoe UI', 'Open Sans', sans-serif;
}
.weather { width: 464px; display: flex; padding-left: 25px; }
.temps { margin: -2px 0 2px 5px; }
.weather svg { margin-top: -3px; }
.tl { display: block; width: max-content; line-height: 20px; }
.dim { color: #bdbdbd; }
.search {
  width: 275px;
  height: 40px;
  margin-left: 17px;
  padding: 0 6px 0 13px;
  display: flex;
  align-items: center;
  border: 1px solid #5b5b5a;
  border-radius: 20px;
  background: #454544;
  color: #d6d6d6;
  font-size: 17px;
}
.search .ib { margin: -1px 0 0 12px; }
.bing { margin-left: auto; }
.apps { display: flex; margin-left: 2px; }
.app {
  position: relative;
  width: 55px;
  height: 50px;
  display: flex;
  align-items: center;
  justify-content: center;
}
.run::after {
  content: '';
  position: absolute;
  left: 24px;
  bottom: 1px;
  width: 8px;
  height: 4px;
  border-radius: 2px;
  background: #9c9c9c;
}
.chrome::before {
  content: '';
  position: absolute;
  inset: 0 2px 0 3px;
  border: 1px solid #3a4252;
  border-radius: 5px;
  background: #2b3444;
}
.chrome svg { position: relative; }
.chrome::after { left: 18px; width: 20px; background: #4cc2ff; }
.badge {
  position: absolute;
  left: 30px;
  top: 10px;
  width: 19px;
  height: 14px;
  border-radius: 4px;
  background: #f23c34;
  font-size: 10.5px;
  line-height: 14px;
  text-align: center;
}
.profile {
  position: absolute;
  left: 28px;
  top: 4px;
  width: 20px;
  height: 20px;
  border-radius: 50%;
  background: #455a64;
  color: #dfe5e8;
  font-size: 12px;
  font-weight: 600;
  line-height: 20px;
  text-align: center;
}
.tray { flex: 1; display: flex; align-items: center; }
.t-up { margin-left: 28px; margin-top: -2px; }
.t-sl { margin-left: 24px; }
.t-m { margin-left: 20px; margin-top: 2px; }
.t-mic { margin-left: 26px; margin-top: -2px; }
.eng { margin-left: 26px; margin-top: -2px; }
.t-wifi { margin-left: 22px; margin-top: -2px; }
.t-vol { margin-left: 10px; margin-top: -2px; }
.t-bat { margin-left: 9px; margin-top: -1px; }
.clock { width: 96px; margin-top: -3px; display: flex; flex-direction: column; align-items: flex-end; }
.count {
  width: 20px;
  height: 20px;
  margin-left: 9px;
  border-radius: 50%;
  background: #4cc2ff;
  color: #111;
  font-size: 13px;
  line-height: 20px;
  text-align: center;
}
</style>
